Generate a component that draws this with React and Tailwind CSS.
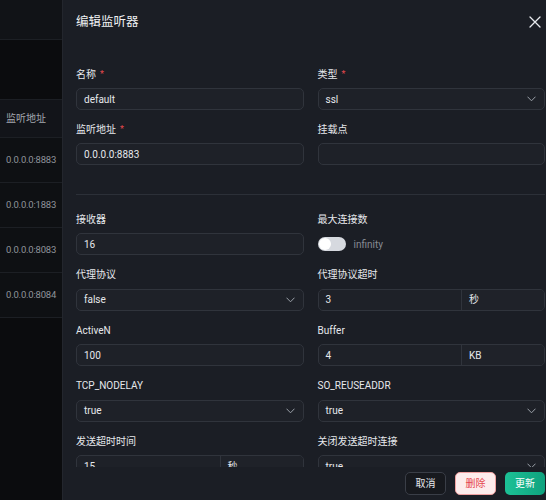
import React from "react";

const FONT = { fontFamily: 'Roboto, "Noto Sans CJK SC", "Liberation Sans", sans-serif' };

function Chevron() {
  return (
    <svg width="9" height="6" viewBox="0 0 9 6" fill="none" className="shrink-0">
      <path d="M0.8 1 L4.5 4.8 L8.2 1" stroke="#9aa0a8" strokeWidth="1" strokeLinecap="round" strokeLinejoin="round" />
    </svg>
  );
}

function Label({ children, req }) {
  return (
    <div className="h-4 mb-[6px] flex items-center text-[10px] text-[#e6e8ec]">
      <span>{children}</span>
      {req && <span className="ml-[4px] text-[#e5484d] text-[9px] leading-none">*</span>}
    </div>
  );
}

const box = "h-[22px] rounded-[5px] border border-[#30343c] bg-[#1e2128] text-[10px] text-[#e6e8ec]";

function Input({ value }) {
  return <div className={`${box} flex items-center px-[7px]`}>{value}</div>;
}

function Select({ value }) {
  return (
    <div className={`${box} flex items-center justify-between pl-[7px] pr-[8px]`}>
      <span>{value}</span>
      <Chevron />
    </div>
  );
}

function Addon({ value, unit }) {
  return (
    <div className={`${box} flex items-stretch overflow-hidden`}>
      <div className="flex-1 flex items-center px-[7px]">{value}</div>
      <div className="w-[83px] shrink-0 flex items-center pl-[7px] border-l border-[#30343c] bg-[#1f2229]">{unit}</div>
    </div>
  );
}

function Field({ label, req, children }) {
  return (
    <div>
      <Label req={req}>{label}</Label>
      {children}
    </div>
  );
}

export default function App() {
  const rows = ["0.0.0.0:8883", "0.0.0.0:1883", "0.0.0.0:8083", "0.0.0.0:8084"];
  return (
    <div className="w-[546px] h-[500px] flex overflow-hidden bg-[#0b0c0e]" style={FONT}>
      <aside className="w-[62px] shrink-0 flex flex-col bg-[#0b0c0e] overflow-hidden">
        <div className="h-[40px] bg-[#111317] border-b border-[#1c1f24]" />
        <div className="h-[60px] bg-[#0b0c0e] border-b border-[#1c1f24]" />
        <div className="h-[38px] bg-[#121419] border-b border-[#1c1f24] flex items-center pl-[6px] text-[10px] text-[#a3a7ae] whitespace-nowrap">
          监听地址
        </div>
        {rows.map((r) => (
          <div
            key={r}
            className="h-[45px] bg-[#0e1013] border-b border-[#1c1f24] flex items-center pl-[6px] text-[9.5px] tracking-[-0.2px] text-[#8e939b] whitespace-nowrap"
          >
            {r}
          </div>
        ))}
      </aside>

      <section className="flex-1 min-w-0 bg-[#1b1e25] flex flex-col border-l border-[#23262d]">
        <header className="h-[44px] shrink-0 flex items-center justify-between pl-[13px] pr-[5px]">
          <h1 className="text-[12.5px] text-[#eef0f3] font-normal">编辑监听器</h1>
          <svg width="12" height="12" viewBox="0 0 12 12" fill="none">
            <path d="M1 1 L11 11 M11 1 L1 11" stroke="#e8eaee" strokeWidth="1.3" strokeLinecap="round" />
          </svg>
        </header>

        <div className="flex-1 min-h-0 overflow-hidden pl-[13px] pr-[1px] pt-[22px]">
          <div className="grid grid-cols-2 gap-x-[14px] gap-y-[11px]">
            <Field label="名称" req>
              <Input value="default" />
            </Field>
            <Field label="类型" req>
              <Select value="ssl" />
            </Field>
            <Field label="监听地址" req>
              <Input value="0.0.0.0:8883" />
            </Field>
            <Field label="挂载点">
              <Input value="" />
            </Field>
          </div>

          <div className="mt-[29px] mb-[16px] h-px bg-[#2c3038]" />

          <div className="grid grid-cols-2 gap-x-[14px] gap-y-[11.5px]">
            <Field label="接收器">
              <Input value="16" />
            </Field>
            <Field label="最大连接数">
              <div className="h-[22px] flex items-center">
                <div className="w-[28px] h-[14px] rounded-full bg-[#d6d9df] flex items-center px-[1px]">
                  <div className="w-[12px] h-[12px] rounded-full bg-white" />
                </div>
                <span className="ml-[8px] text-[10px] text-[#868b94]">infinity</span>
              </div>
            </Field>
            <Field label="代理协议">
              <Select value="false" />
            </Field>
            <Field label="代理协议超时">
              <Addon value="3" unit="秒" />
            </Field>
            <Field label="ActiveN">
              <Input value="100" />
            </Field>
            <Field label="Buffer">
              <Addon value="4" unit="KB" />
            </Field>
            <Field label="TCP_NODELAY">
              <Select value="true" />
            </Field>
            <Field label="SO_REUSEADDR">
              <Select value="true" />
            </Field>
            <Field label="发送超时时间">
              <Addon value="15" unit="秒" />
            </Field>
            <Field label="关闭发送超时连接">
              <Select value="true" />
            </Field>
          </div>
        </div>

        <footer className="h-[33px] shrink-0 flex items-center justify-end gap-[9px] pr-[1px] bg-[#1b1e25]">
          <button className="w-[41px] h-[23px] rounded-[5px] border border-[#3a3e47] bg-[#17191e] text-[10px] text-[#e6e8ec]">
            取消
          </button>
          <button className="w-[41px] h-[23px] rounded-[5px] border border-[#f0a0a0] bg-[#fdecec] text-[10px] text-[#e5484d]">
            删除
          </button>
          <button className="w-[40px] h-[23px] rounded-[5px] bg-gradient-to-r from-[#1cc196] to-[#0fa27e] text-[10px] text-white">
            更新
          </button>
        </footer>
      </section>
    </div>
  );
}
